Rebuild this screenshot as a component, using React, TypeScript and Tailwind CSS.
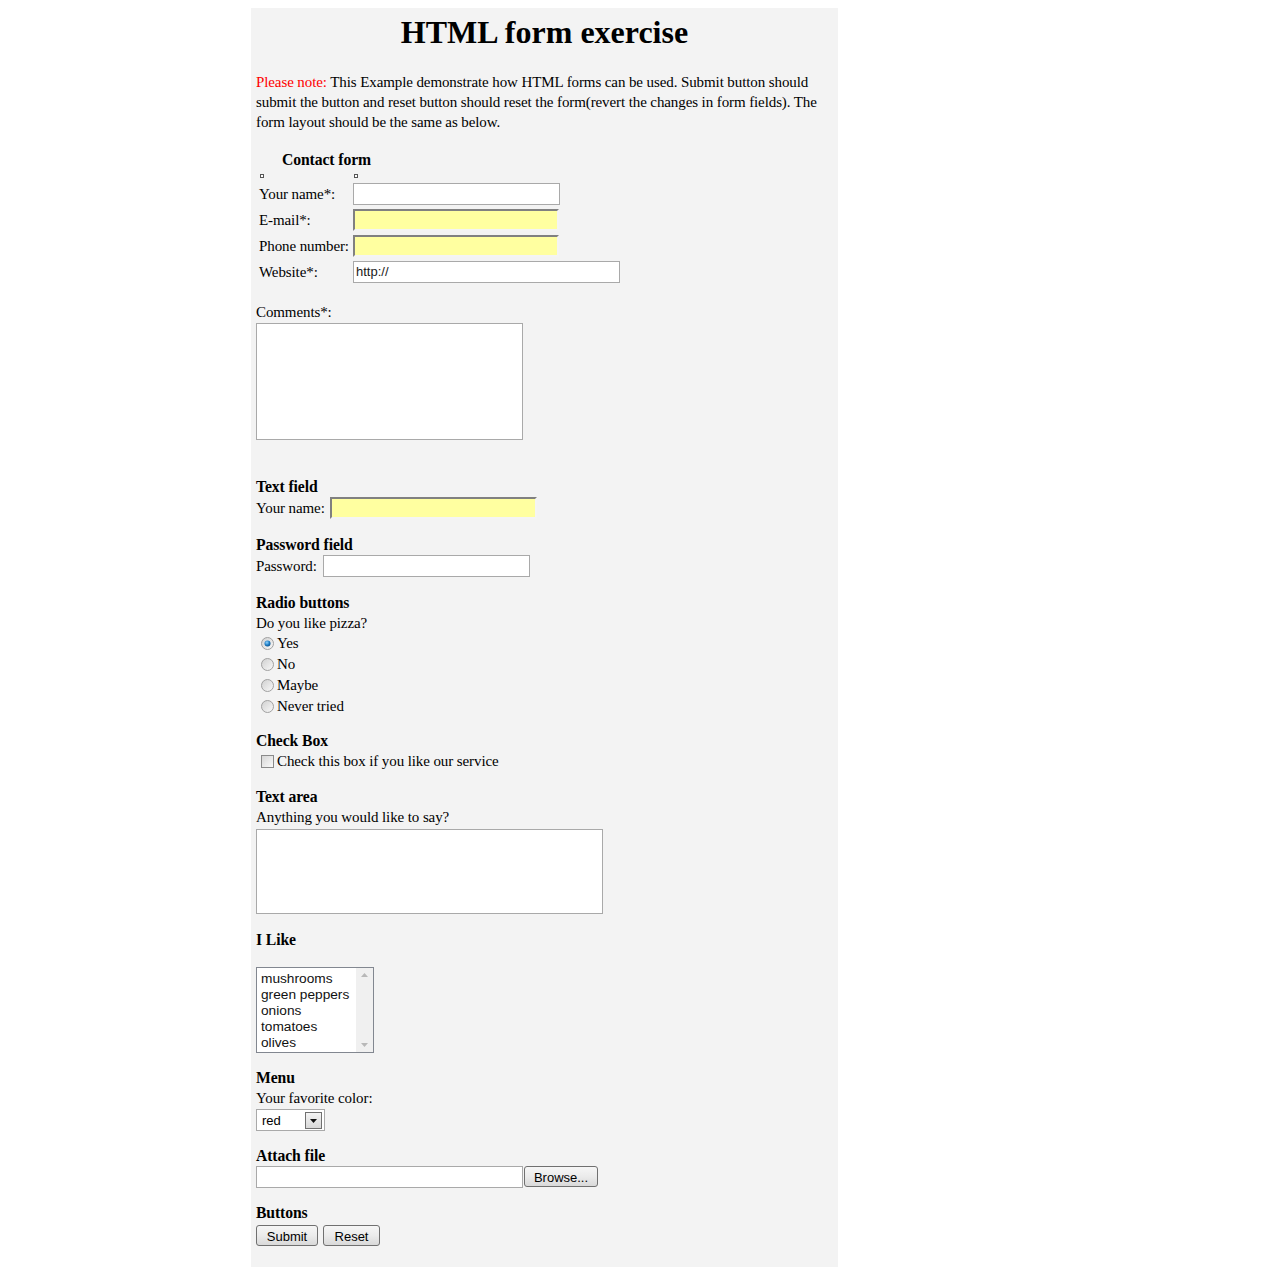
import React from 'react';

const serif = { fontFamily: '"Liberation Serif", "Times New Roman", serif' };
const sans = { fontFamily: '"Liberation Sans", Arial, sans-serif' };

function Heading({ children, className = '' }: { children: React.ReactNode; className?: string }) {
  return <div className={`whitespace-nowrap text-[15.7px] font-bold leading-[20px] ${className}`}>{children}</div>;
}

function Radio({ checked = false }: { checked?: boolean }) {
  const id = checked ? 'rg-on' : 'rg-off';
  return (
    <svg width="13" height="13" viewBox="0 0 13 13" className="ml-[5px] mr-[3px] shrink-0">
      <defs>
        <linearGradient id={id} x1="0" y1="0" x2="1" y2="1">
          <stop offset="0" stopColor="#cfcfcf" />
          <stop offset="1" stopColor="#fafafa" />
        </linearGradient>
        <radialGradient id="dot" cx="0.4" cy="0.35" r="0.7">
          <stop offset="0" stopColor="#8fd3ff" />
          <stop offset="0.6" stopColor="#1b7ac2" />
          <stop offset="1" stopColor="#0b4f88" />
        </radialGradient>
      </defs>
      <circle cx="6.5" cy="6.5" r="6" fill={`url(#${id})`} stroke="#a0a0a0" strokeWidth="1" />
      {checked && <circle cx="6.5" cy="6.5" r="3" fill="url(#dot)" />}
    </svg>
  );
}

function Checkbox() {
  return (
    <span className="ml-[5px] mr-[3px] inline-block h-[13px] w-[13px] shrink-0 border border-[#8a8a8a] bg-gradient-to-br from-[#d6d6d6] to-[#fafafa]" />
  );
}

function Button({ children, w }: { children: React.ReactNode; w: string }) {
  return (
    <span
      className={`${w} inline-flex h-[21px] items-center justify-center rounded-[3px] border border-[#707070] bg-gradient-to-b from-[#f6f6f6] via-[#ebebeb] to-[#d9d9d9] pt-[1px] text-[13px] leading-none text-black`}
      style={sans}
    >
      {children}
    </span>
  );
}

const plainInput = 'h-[22px] border border-[#a9a9a9] bg-white';
const yellowInput =
  'h-[22px] border-2 border-t-[#808080] border-l-[#808080] border-b-[#f4f4f4] border-r-[#f4f4f4] bg-[#ffffa0]';

export default function App() {
  return (
    <div className="min-h-[1276px] bg-white pt-2 text-[15px] tracking-[-0.1px] text-black" style={serif}>
      <div className="ml-[251px] h-[1259px] w-[587px] bg-[#f3f3f3] px-[5px]">
        <h1 className="pt-[6px] text-center text-[32px] font-bold leading-[37px] tracking-normal">HTML form exercise</h1>

        <p className="mt-[21px] whitespace-nowrap leading-[20px]">
          <span className="text-[#ff0000]">Please note:</span> This Example demonstrate how HTML forms can be used. Submit button should
          <br />
          submit the button and reset button should reset the form(revert the changes in form fields). The
          <br />
          form layout should be the same as below.
        </p>

        {/* Contact form */}
        <Heading className="mt-[18px] pl-[26px]">Contact form</Heading>
        <div className="mb-[3px] mt-[4px] flex h-[4px]">
          <span className="ml-[4px] h-[4px] w-[4px] border border-[#555] bg-white" />
          <span className="ml-[90px] h-[4px] w-[4px] border border-[#555] bg-white" />
        </div>
        <div className="grid grid-cols-[94px_1fr] whitespace-nowrap pl-[3px]">
          <div className="flex h-[26px] items-center">Your name*:</div>
          <div className="flex h-[26px] items-center">
            <div className={`${plainInput} w-[207px]`} />
          </div>
          <div className="flex h-[26px] items-center">E-mail*:</div>
          <div className="flex h-[26px] items-center">
            <div className={`${yellowInput} w-[206px]`} />
          </div>
          <div className="flex h-[26px] items-center">Phone number:</div>
          <div className="flex h-[26px] items-center">
            <div className={`${yellowInput} w-[206px]`} />
          </div>
          <div className="flex h-[26px] items-center">Website*:</div>
          <div className="flex h-[26px] items-center">
            <div className={`${plainInput} flex w-[267px] items-center pl-[2px] text-[13px] tracking-normal text-[#1a1a1a]`} style={sans}>
              http://
            </div>
          </div>
        </div>

        <div className="mt-[17px] leading-[20px]">Comments*:</div>
        <div className="mt-[1px] h-[117px] w-[267px] border border-[#a9a9a9] bg-white" />

        {/* Text field */}
        <Heading className="mt-[37px]">Text field</Heading>
        <div className="flex h-[22px] items-center whitespace-nowrap">
          <span className="mr-[5px]">Your name:</span>
          <div className={`${yellowInput} w-[207px]`} />
        </div>

        <Heading className="mt-[16px]">Password field</Heading>
        <div className="flex h-[22px] items-center whitespace-nowrap">
          <span className="mr-[6px]">Password:</span>
          <div className={`${plainInput} w-[207px]`} />
        </div>

        {/* Radio buttons */}
        <Heading className="mt-[16px]">Radio buttons</Heading>
        <div className="leading-[20px]">Do you like pizza?</div>
        {[
          ['Yes', true],
          ['No', false],
          ['Maybe', false],
          ['Never tried', false],
        ].map(([label, checked]) => (
          <div key={label as string} className="flex h-[21px] items-center whitespace-nowrap">
            <Radio checked={checked as boolean} />
            <span>{label as string}</span>
          </div>
        ))}

        <Heading className="mt-[14px]">Check Box</Heading>
        <div className="flex h-[20px] items-center whitespace-nowrap">
          <Checkbox />
          <span>Check this box if you like our service</span>
        </div>

        <Heading className="mt-[16px]">Text area</Heading>
        <div className="leading-[20px]">Anything you would like to say?</div>
        <div className="mt-[2px] h-[85px] w-[347px] border border-[#a9a9a9] bg-white" />

        {/* I Like */}
        <Heading className="mt-[16px]">I Like</Heading>
        <div
          className="mt-[17px] flex h-[86px] w-[118px] border border-[#828790] bg-white text-[13.7px] leading-[16px] tracking-normal text-[#111]"
          style={sans}
        >
          <div className="flex-1 whitespace-nowrap pl-[4px] pt-[3px]">
            <div>mushrooms</div>
            <div>green peppers</div>
            <div>onions</div>
            <div>tomatoes</div>
            <div>olives</div>
          </div>
          <div className="flex w-[17px] flex-col items-center justify-between bg-[#f0f0f0] py-[5px]">
            <svg width="7" height="4" viewBox="0 0 7 4">
              <path d="M0 4 L3.5 0 L7 4 Z" fill="#b8b8b8" />
            </svg>
            <svg width="7" height="4" viewBox="0 0 7 4">
              <path d="M0 0 L3.5 4 L7 0 Z" fill="#b8b8b8" />
            </svg>
          </div>
        </div>

        {/* Menu */}
        <Heading className="mt-[15px]">Menu</Heading>
        <div className="leading-[20px]">Your favorite color:</div>
        <div
          className="mt-[1px] flex h-[22px] w-[69px] items-center justify-between border border-[#a9a9a9] bg-white pl-[5px] pr-[2px] pt-[1px] text-[13px] tracking-normal"
          style={sans}
        >
          <span>red</span>
          <span className="flex h-[17px] w-[17px] items-center justify-center border border-[#707070] bg-gradient-to-b from-[#f4f4f4] to-[#d8d8d8]">
            <svg width="7" height="4" viewBox="0 0 7 4">
              <path d="M0 0 L3.5 4 L7 0 Z" fill="#111" />
            </svg>
          </span>
        </div>

        {/* Attach file */}
        <Heading className="mt-[15px]">Attach file</Heading>
        <div className="flex h-[22px] items-center">
          <div className={`${plainInput} w-[267px]`} />
          <span className="ml-[1px] tracking-normal">
            <Button w="w-[74px]">Browse...</Button>
          </span>
        </div>

        {/* Buttons */}
        <Heading className="mt-[15px]">Buttons</Heading>
        <div className="mt-[2px] flex gap-[5px] tracking-normal">
          <Button w="w-[62px]">Submit</Button>
          <Button w="w-[57px]">Reset</Button>
        </div>
      </div>
    </div>
  );
}
